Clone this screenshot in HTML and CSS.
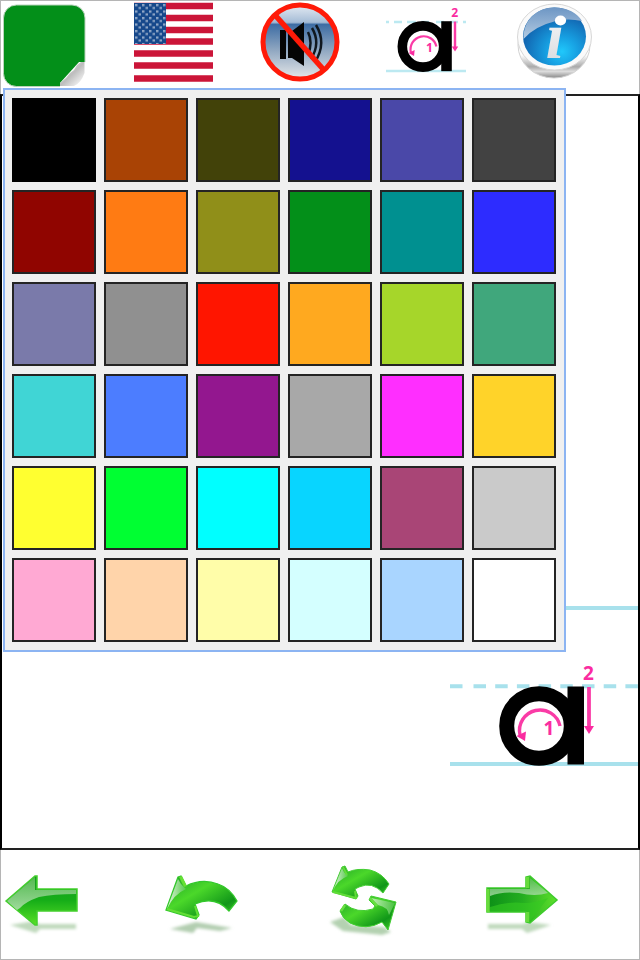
FILE: index.html
```html
<!DOCTYPE html>
<html lang="en">
<head>
<meta charset="utf-8">
<title>Letter tracing</title>
<link rel="stylesheet" href="styles.css">
</head>
<body>
<main class="app">
  <header class="toolbar">
    <svg class="tool" viewBox="0 0 128 88">
      <defs><linearGradient id="curl" x1="0" y1="0" x2="1" y2="1"><stop offset=".2" stop-color="#dedede"/><stop offset=".5" stop-color="#bdbdbd"/><stop offset=".8" stop-color="#e8e8e8"/></linearGradient></defs>
      <rect x="3.5" y="5" width="81.5" height="81.5" rx="13" fill="#038f19" stroke="#b9d3bc" stroke-width="1"/>
      <path d="M60 88V83L79 62H87V88Z" fill="#fff"/>
      <path d="M60 86V83L66 78L70 73L74 70L77 65L81 62H84.500V73Q81 83 74 86Z" fill="url(#curl)"/>
    </svg>
    <svg class="tool" viewBox="128 0 128 88">
      <defs><pattern id="stars" x="134" y="3" width="7" height="6.500" patternUnits="userSpaceOnUse"><rect width="7" height="6.500" fill="#16488b"/><path d="M1 2h2.500M4.500 5h2.500" stroke="#8fa6c6" stroke-width="2.300"/></pattern></defs>
      <rect x="134" y="3" width="79" height="79" fill="#fff"/>
      <path d="M134 6h79M134 18h79M134 30h79M134 41.500h79M134 53.500h79M134 65.500h79M134 78.500h79" stroke="#cb1538" stroke-width="6.300"/>
      <rect x="134" y="3" width="32" height="41" fill="url(#stars)"/>
    </svg>
    <svg class="tool" viewBox="256 0 128 88">
      <defs><linearGradient id="mute" x1="0" y1="0" x2="0" y2="1"><stop offset="0" stop-color="#e2e9f2"/><stop offset=".23" stop-color="#a5bcd6"/><stop offset=".26" stop-color="#3e6da4"/><stop offset=".6" stop-color="#8da5c0"/><stop offset="1" stop-color="#e5e7e8"/></linearGradient></defs>
      <circle cx="300" cy="42" r="36.500" fill="url(#mute)"/>
      <path d="M280 30h6v29h-6zM288 31H292L304 22V66L292 58H288Z" fill="#050505"/>
      <path d="M308 32Q313 42 308 55M312 28Q321 43 311 59M316 25Q327 43 315 62" fill="none" stroke="#101820" stroke-width="2.500"/>
      <path d="M275 15L323 69" stroke="#ff1a08" stroke-width="5.500"/>
      <circle cx="300" cy="42" r="37" fill="none" stroke="#ff1a08" stroke-width="5"/>
    </svg>
    <svg class="tool" viewBox="384 0 128 88">
      <defs>
        <g id="guide">
          <circle cx="539" cy="726" r="32.300" fill="#fff" stroke="#000" stroke-width="15"/>
          <rect x="567.500" y="686.500" width="16.500" height="78" fill="#000"/>
          <path d="M560 726A20.500 20.500 0 1 0 520 735" fill="none" stroke="#fa3ba6" stroke-width="3.400"/>
          <path d="M516.500 736L526 731.500L525 741Z" fill="#fa2ca0"/>
          <path d="M589 687V728" stroke="#fa3ba6" stroke-width="3.800"/>
          <path d="M584 726H594L589 734Z" fill="#fa2ca0"/>
          <text x="549" y="735" class="stroke-number">1</text>
          <text x="588.500" y="680" class="stroke-number">2</text>
        </g>
      </defs>
      <path d="M386 22h3M394 22h8M407 22h9M421 22h8M436 22h8M450 22h8M463 22h3M386 71h80" stroke="#bce9f1" stroke-width="2.600"/>
      <use href="#guide" transform="translate(423 46.500) scale(.64) translate(-539 -726)"/>
    </svg>
    <svg class="tool" viewBox="512 0 128 88">
      <defs>
        <linearGradient id="rim" x1="0" y1="0" x2="0" y2="1"><stop offset="0" stop-color="#eee"/><stop offset=".65" stop-color="#fff"/><stop offset=".83" stop-color="#aaa"/><stop offset=".9" stop-color="#ddd"/><stop offset="1" stop-color="#888"/></linearGradient>
        <radialGradient id="blue" cx=".62" cy=".76" r=".62"><stop offset="0" stop-color="#20c8fb"/><stop offset=".4" stop-color="#17a0e2"/><stop offset="1" stop-color="#1266b1"/></radialGradient>
        <linearGradient id="shine" x1="0" y1="0" x2="0" y2="1"><stop offset="0" stop-color="#6d96c4"/><stop offset="1" stop-color="#b4cbe2"/></linearGradient>
        <linearGradient id="metal" x1="0" y1="0" x2="0" y2="1"><stop offset="0" stop-color="#fff"/><stop offset="1" stop-color="#d4d7db"/></linearGradient>
      </defs>
      <ellipse cx="554" cy="45" rx="36" ry="33" fill="url(#rim)" stroke="#d2d2d2"/>
      <ellipse cx="554.500" cy="37" rx="37" ry="33" fill="#fafafa" stroke="#d7d7d7"/>
      <ellipse cx="554.500" cy="36.500" rx="31.500" ry="29" fill="url(#blue)"/>
      <path d="M523.500 39C523 20 537 7.500 554 7.500C568 7.500 577 13 582 21Q568 18 556 21Q535 26 523.500 39Z" fill="url(#shine)"/>
      <text x="555" y="58" class="info-mark">ı</text>
      <ellipse cx="560.500" cy="20.500" rx="5.600" ry="5" fill="#fff"/>
    </svg>
  </header>

  <section class="canvas">
    <svg class="sheet" viewBox="2 96 636 752">
      <path d="M450 608H638M450 764H638" stroke="#a8e1ec" stroke-width="3.800"/>
      <path d="M450 686.300H464M473.500 686.300H638" stroke="#a8e1ec" stroke-width="4" stroke-dasharray="12.500 9.200"/>
      <use href="#guide"/>
    </svg>
  </section>

  <footer class="actions">
    <svg class="action" viewBox="0 850 160 110">
      <defs>
        <linearGradient id="green" x1="0" y1="0" x2="0" y2="1"><stop offset="0" stop-color="#159b22"/><stop offset=".5" stop-color="#16ae18"/><stop offset="1" stop-color="#59df26"/></linearGradient>
        <linearGradient id="leaf" x1="0" y1="0" x2="1" y2="1"><stop offset="0" stop-color="#1b9e27"/><stop offset=".4" stop-color="#4bd82a"/><stop offset=".75" stop-color="#119719"/><stop offset="1" stop-color="#49d32c"/></linearGradient>
        <linearGradient id="gloss" x1="0" y1="0" x2="0" y2="1"><stop offset="0" stop-color="#5fbf59"/><stop offset="1" stop-color="#b5dfb3"/></linearGradient>
        <linearGradient id="pale" x1="0" y1="0" x2="1" y2="0"><stop offset="0" stop-color="#e5f4e2"/><stop offset="1" stop-color="#55c94b"/></linearGradient>
        <linearGradient id="right" x1="0" y1="0" x2="1" y2="0"><stop offset="0" stop-color="#0c8f17"/><stop offset=".5" stop-color="#23ad20"/><stop offset="1" stop-color="#5ee02c"/></linearGradient>
        <filter id="soft" x="-20%" y="-100%" width="140%" height="300%"><feGaussianBlur stdDeviation="1.800"/></filter>
      </defs>
      <path d="M10 925L34 921L39 924H76V929H40L36 933Z" fill="#bfd9bc" filter="url(#soft)"/>
      <path d="M6 901L35 876H37V889H77V911H37V925H35Z" fill="url(#green)" stroke="#43cf2c" stroke-width="1.500"/>
      <path d="M7 901L35 877V890H76V894Q53 894 39 897Q25 902 20 908L17 910Z" fill="url(#gloss)" opacity=".85"/>
    </svg>
    <svg class="action" viewBox="160 850 160 110">
      <path d="M170 929L196 922L232 928L220 931L197 928L193 933Z" fill="#b2ceb0" filter="url(#soft)"/>
      <path d="M178 877L181 876L186 886Q202 878 218 884Q230 888 237 901L229 911Q215 895 195 904L199 915L196 919L166 910Z" fill="url(#leaf)" stroke="#32c82b" stroke-width="1.300"/>
      <path d="M178 879L167 909Q174 894 186 889L181 884Z" fill="url(#pale)"/>
      <path d="M179 877L184 887L187 886L182 876Z" fill="#65df35"/>
      <path d="M167 909L194 917L198 916L195 906" fill="none" stroke="#63df35" stroke-width="2"/>
    </svg>
    <svg class="action" viewBox="320 850 160 110">
      <path d="M330 922L344 917L351 925L384 927L391 932L382 935L343 931Z" fill="#b4d1b1" filter="url(#soft)"/>
      <path d="M342 867L345 866L348 872Q357 868 370 870Q382 873 389 884L383 893Q372 881 359 887L355 889L358 896L356 899L332 892Z" fill="url(#leaf)" stroke="#43cd32"/>
      <path d="M342 868L333 891Q337 880 348 876L344 872Z" fill="url(#pale)"/>
      <path d="M343 867L347 875M333 892L356 898L355 891" fill="none" stroke="#61dc38" stroke-width="2"/>
      <path d="M345 904Q357 914 373 909L375 906L369 900L371 896L396 902L388 930L382 922Q366 931 350 923Q342 918 340 911Z" fill="url(#leaf)" stroke="#43cd32"/>
      <path d="M371 898L395 903L389 915Q388 907 378 905Z" fill="url(#pale)" opacity=".75"/>
      <path d="M370 898L377 906M341 911L345 905" stroke="#68df42" stroke-width="2.500"/>
    </svg>
    <svg class="action" viewBox="480 850 160 110">
      <path d="M488 924H523L528 922L551 925L527 933L522 929H488Z" fill="#bfd9bc" filter="url(#soft)"/>
      <path d="M487 888H526V877L530 876L557 900L530 923L526 922V912H487Z" fill="url(#right)" stroke="#3ecb2c" stroke-width="1.500"/>
      <path d="M490 889H530V878L548 893Q535 897 519 893Q502 891 490 896Z" fill="url(#gloss)" opacity=".75"/>
      <path d="M490 911V907Q508 901 524 903Q536 903 548 898L530 921L527 911Z" fill="#35c922" opacity=".6"/>
      <path d="M488 889V912M527.500 877V888M527.500 912V922" stroke="#68db3d" stroke-width="3.500"/>
    </svg>
  </footer>

  <div class="palette">
    <i class="swatch black"></i><i class="swatch brown"></i><i class="swatch dark-olive"></i><i class="swatch navy"></i><i class="swatch indigo"></i><i class="swatch charcoal"></i>
    <i class="swatch maroon"></i><i class="swatch orange"></i><i class="swatch olive"></i><i class="swatch green"></i><i class="swatch teal"></i><i class="swatch blue"></i>
    <i class="swatch slate"></i><i class="swatch gray"></i><i class="swatch red"></i><i class="swatch amber"></i><i class="swatch lime"></i><i class="swatch sea"></i>
    <i class="swatch turquoise"></i><i class="swatch azure"></i><i class="swatch purple"></i><i class="swatch silver"></i><i class="swatch magenta"></i><i class="swatch gold"></i>
    <i class="swatch yellow"></i><i class="swatch neon"></i><i class="swatch cyan"></i><i class="swatch sky"></i><i class="swatch plum"></i><i class="swatch light-gray"></i>
    <i class="swatch pink"></i><i class="swatch peach"></i><i class="swatch cream"></i><i class="swatch ice"></i><i class="swatch pale-blue"></i><i class="swatch white"></i>
  </div>
</main>
</body>
</html>
```
FILE: styles.css
```css
* { box-sizing: border-box; }
body { margin: 0; background: #fff; }
.app {
  position: relative;
  display: grid;
  grid-template-rows: 94px 756px 110px;
  width: 640px;
  height: 960px;
  overflow: hidden;
  background: #fff;
}
.toolbar {
  display: grid;
  grid-template-columns: repeat(5, 128px);
  box-shadow: inset 0 1px #b5b5b5, inset 1px 0 #b5b5b5, inset -1px 0 #b5b5b5;
}
.tool { width: 128px; height: 88px; }
.canvas { border: 2px solid #000; border-top-color: #222; border-bottom-color: #222; }
.sheet { display: block; width: 636px; height: 752px; }
.actions {
  display: grid;
  grid-template-columns: repeat(4, 160px);
  box-shadow: inset 0 -1px #b5b5b5, inset 1px 0 #b5b5b5, inset -1px 0 #b5b5b5;
}
.action { width: 160px; height: 110px; }
.stroke-number {
  font: bold 19px "Noto Sans", sans-serif;
  fill: #fa2ca0;
  text-anchor: middle;
}
.info-mark {
  font: italic bold 66px "Liberation Serif", serif;
  fill: url(#metal);
  text-anchor: middle;
}
.palette {
  position: absolute;
  left: 3px;
  top: 88px;
  display: grid;
  grid-template-columns: repeat(6, 84px);
  grid-auto-rows: 84px;
  gap: 8px;
  padding: 8px 8px 8px 7px;
  border: 2px solid #8cb4f2;
  background: #f0f0f0;
}
.swatch { border: 2px solid #242424; }
.black { background: #000; border-color: #000; }
.brown { background: #a94305; }
.dark-olive { background: #424209; }
.navy { background: #14118f; }
.indigo { background: #4a48a8; }
.charcoal { background: #424242; }
.maroon { background: #900500; }
.orange { background: #ff7b13; }
.olive { background: #908f19; }
.green { background: #038f19; }
.teal { background: #009090; }
.blue { background: #2d2cff; }
.slate { background: #7a7aaa; }
.gray { background: #909090; }
.red { background: #ff1500; }
.amber { background: #ffa91f; }
.lime { background: #a6d62a; }
.sea { background: #40a77c; }
.turquoise { background: #40d5d5; }
.azure { background: #4c7dff; }
.purple { background: #93178f; }
.silver { background: #a8a8a8; }
.magenta { background: #ff2eff; }
.gold { background: #ffd329; }
.yellow { background: #ffff30; }
.neon { background: #00ff32; }
.cyan { background: #00ffff; }
.sky { background: #08d5ff; }
.plum { background: #a94576; }
.light-gray { background: #cacaca; }
.pink { background: #ffa9d3; }
.peach { background: #ffd4aa; }
.cream { background: #fffda9; }
.ice { background: #d4ffff; }
.pale-blue { background: #a9d5ff; }
.white { background: #fff; }
```
